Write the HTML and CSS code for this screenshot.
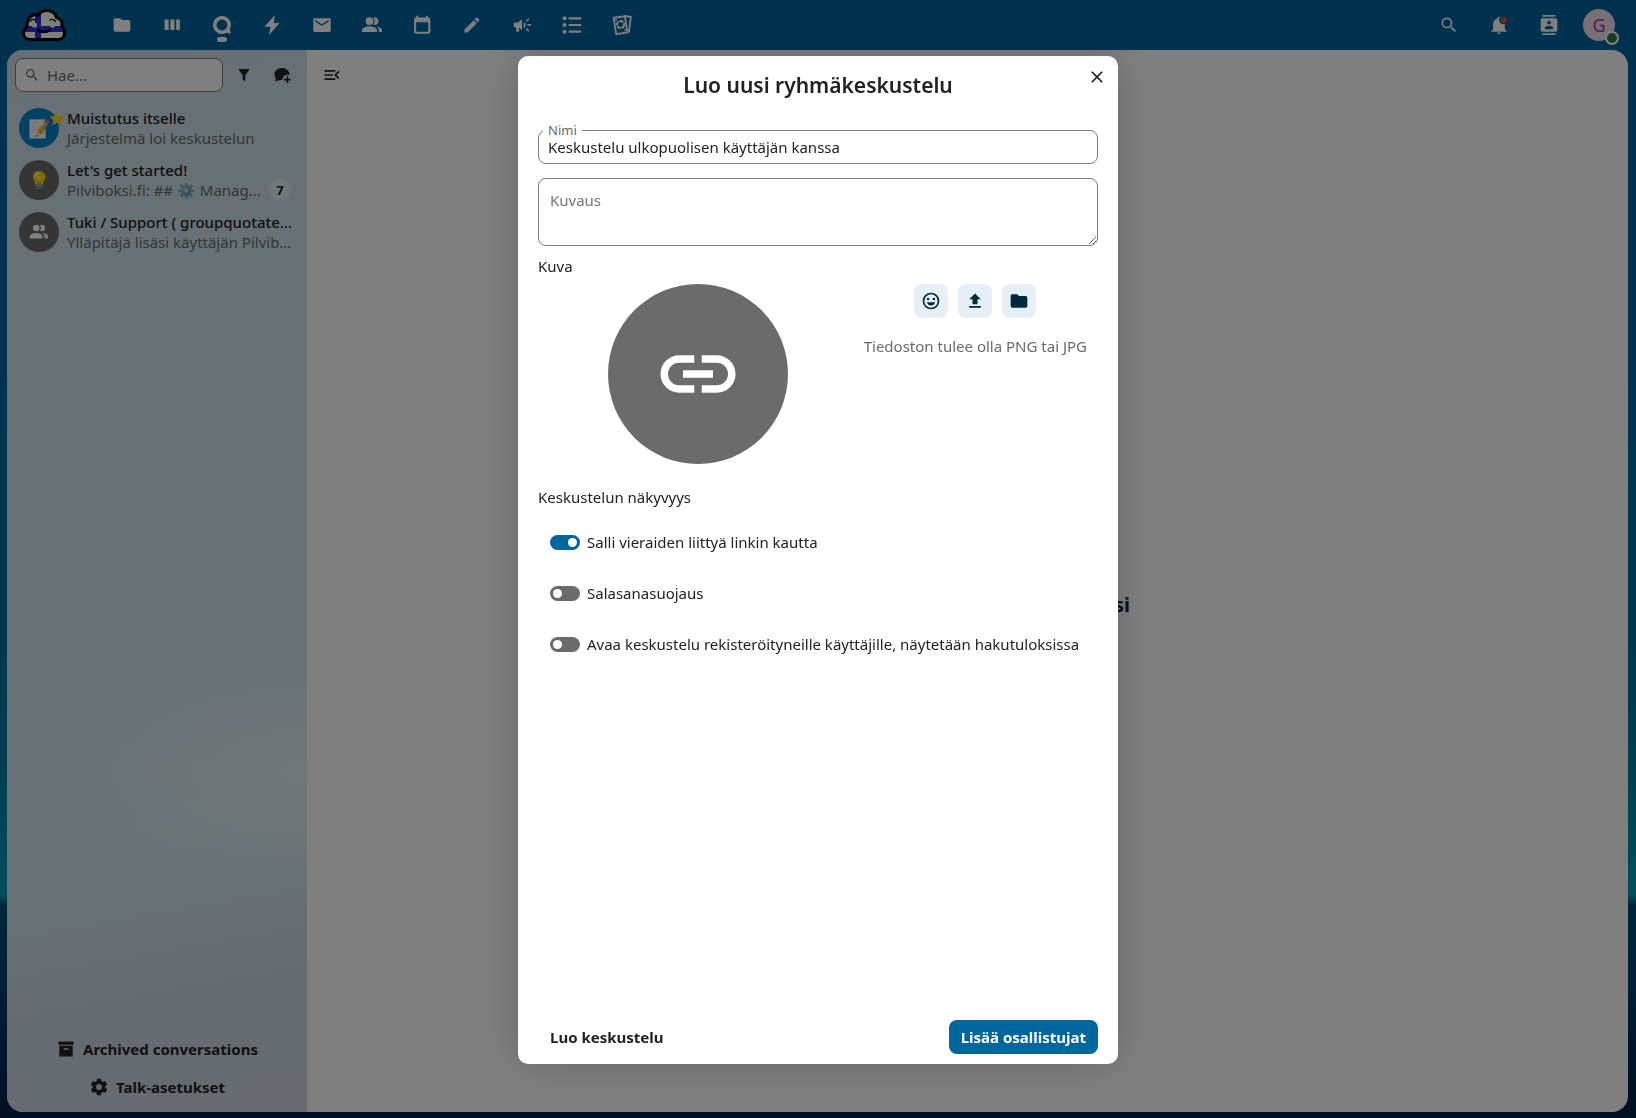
FILE: index.html
```html
<!DOCTYPE html>
<html lang="fi">
<head>
  <meta charset="UTF-8" />
  <meta name="viewport" content="width=device-width, initial-scale=1.0"/>
  <title>Luo uusi ryhmäkeskustelu</title>
  <link rel="stylesheet" href="styles.css">
</head>
<body>
  <!-- Top bar -->
  <header class="header">
    <a class="logo" href="#" aria-label="Pilviboksi">
      <svg width="44" height="32" viewBox="0 0 44 32">
        <defs>
          <clipPath id="cloud"><path d="M8 30.500c-4 0-6.500-3-6.500-6.500 0-3 1.500-5 3.500-6C4.500 11 8 6 13 5.500c1 0 2 .2 3 .5C18 3 21 1.500 25 1.500c5 0 9 3 9.500 7 4 1 6 4.500 5.500 8.500 1.700 1.500 2.500 4 2.500 6.500 0 4-2.500 7-6.500 7z"/></clipPath>
        </defs>
        <g clip-path="url(#cloud)">
          <path fill="#fff" d="M0 0h44v32H0z"/>
          <path fill="#2f2fd0" d="M13 0h6v32h-6zM0 17h44v6H0z"/>
        </g>
        <path fill="none" stroke="#000" stroke-width="3" d="M8 30.500c-4 0-6.500-3-6.500-6.500 0-3 1.500-5 3.500-6C4.500 11 8 6 13 5.500c1 0 2 .2 3 .5C18 3 21 1.500 25 1.500c5 0 9 3 9.500 7 4 1 6 4.500 5.500 8.500 1.700 1.500 2.500 4 2.500 6.500 0 4-2.500 7-6.500 7z"/>
        <circle cx="12.500" cy="16" r="2.600"/><circle cx="30.500" cy="16" r="2.600"/>
        <path fill="none" stroke="#000" stroke-width="1.300" stroke-linecap="round" d="M8 12.500c1-2 3.500-2.500 5.500-1.500M28 11c2-1 4.500-.5 5.500 1.500"/>
        <path fill="none" stroke="#000" stroke-width="2.600" stroke-linecap="round" d="M16 21c2.500 2.500 9 2.500 11.500 0"/>
      </svg>
    </a>
    <nav class="apps">
      <a href="#" aria-label="Tiedostot"><svg viewBox="0 0 24 24"><path d="M10 4H4c-1.110 0-2 .890-2 2v12a2 2 0 0 0 2 2h16a2 2 0 0 0 2-2V8a2 2 0 0 0-2-2h-8z"/></svg></a>
      <a href="#" aria-label="Pakka"><svg viewBox="0 0 24 24"><path d="M3 5.500h5v12.500H3zM10 5.500h5v12.500h-5zM17 5.500h4.500v12.500H17z"/></svg></a>
      <a href="#" aria-label="Talk" class="active"><svg viewBox="0 0 24 24"><path fill-rule="evenodd" d="M12 1.200a10.800 10.800 0 1 0 5.800 19.900c1.400.9 3.300 1.600 4.600 1 .5-.5-.8-3.100-1.100-4.700A10.800 10.800 0 0 0 12 1.200zm0 4.300a6.500 6.500 0 1 1 0 13 6.500 6.500 0 0 1 0-13z"/></svg></a>
      <a href="#" aria-label="Aktiviteetti"><svg viewBox="0 0 24 24"><path d="M15.500 0 3 14h7L8.500 24 21 9.500h-7z"/></svg></a>
      <a href="#" aria-label="Sähköposti"><svg viewBox="0 0 24 24"><path d="m20 8-8 5-8-5V6l8 5 8-5m2-2H3C1.890 4 1.500 4.890 1.500 6v12.500a2 2 0 0 0 2 2h17a2 2 0 0 0 2-2V6c0-1.110-.5-2-2-2z"/></svg></a>
      <a href="#" aria-label="Yhteystiedot"><svg viewBox="0 0 24 24"><path d="M9 12a4.700 4.700 0 1 0 0-9.400A4.700 4.700 0 0 0 9 12zM9 13.500c-3.300 0-9 1.500-9 4.800v2.200h18v-2.200c0-3.300-5.700-4.800-9-4.800zM15 12a4.700 4.700 0 1 0-1.500-9.100 6.800 6.800 0 0 1 0 8.400c.5.500 1 .7 1.500.7zM17.500 13.800c1.700 1.100 2.700 2.600 2.700 4.500v2.200H24v-2.200c0-2.500-3.400-4-6.500-4.500z"/></svg></a>
      <a href="#" aria-label="Kalenteri"><svg viewBox="0 0 24 24"><path fill-rule="evenodd" d="M5 1v2H4.500A2.300 2.300 0 0 0 2.500 5.300v14.900a2.300 2.300 0 0 0 2.300 2.300h14.900a2.300 2.300 0 0 0 2.300-2.300V5.300A2.300 2.300 0 0 0 19.700 3H19V1h-2.500v2h-9V1zM5 8.700h14.500V20H5z"/></svg></a>
      <a href="#" aria-label="Muistiinpanot"><svg viewBox="0 0 24 24"><path d="M20.710 7.040c.390-.390.390-1.040 0-1.410l-2.340-2.340c-.370-.390-1.020-.390-1.410 0l-1.840 1.830 3.750 3.750M3 17.250V21h3.750L17.810 9.930l-3.750-3.750z"/></svg></a>
      <a href="#" aria-label="Ilmoitukset"><svg viewBox="0 0 24 24"><path d="M12 5 7 9H4c-1 0-2 1-2 2v2c0 1 1 2 2 2h1v5h3.500v-5L12 18.500zM14 8v8a4.500 4.500 0 0 0 0-8zM16.500 6.800l3-3 1.300 1.500-3 2.800zM18.500 10.900H23v2h-4.500zM16.500 17l1.300-1.300 3 2.800-1.300 1.500z"/></svg></a>
      <a href="#" aria-label="Tehtävät"><svg viewBox="0 0 24 24"><circle cx="3" cy="4" r="2.400"/><circle cx="3" cy="12" r="2.400"/><circle cx="3" cy="20" r="2.400"/><path d="M8 2.800h15v2.600H8zM8 10.700h15v2.600H8zM8 18.600h15v2.600H8z"/></svg></a>
      <a href="#" aria-label="Kuvat"><svg viewBox="0 0 24 24"><g fill="none" stroke="currentColor" stroke-width="2.200"><path d="m2 3.300 13.500-1.800 3 19.500L5 23z"/><path d="M14 1l8.500 1.200-2 17.500-2 .3"/><circle cx="10.300" cy="11.500" r="4.200" stroke-width="2.600" stroke-dasharray="5 1"/></g><path d="M4 5h2v2H4zM14.500 17h2v2h-2z"/></svg></a>
    </nav>
    <div class="tools">
      <button aria-label="Haku"><svg viewBox="0 0 24 24"><path d="M9.500 3A6.500 6.500 0 0 1 16 9.500c0 1.610-.590 3.090-1.560 4.230l.270.270h.790l5 5-1.500 1.500-5-5v-.790l-.270-.270A6.500 6.500 0 1 1 9.500 3m0 2a4.500 4.500 0 1 0 0 9 4.500 4.500 0 0 0 0-9z"/></svg></button>
      <button aria-label="Ilmoitukset"><svg viewBox="0 0 24 24"><path d="M12 2a2 2 0 0 0-2 2v.3C7 5.200 5 7.900 5 11v6l-2 2v1h18v-1l-2-2v-6c0-3-2-5.800-5-6.700V4a2 2 0 0 0-2-2zm-2 19a2 2 0 0 0 4 0z"/><circle class="cutout" cx="17" cy="6" r="5"/><circle class="alert" cx="17.500" cy="6" r="3.600"/></svg></button>
      <button aria-label="Yhteystietohaku"><svg viewBox="0 0 24 24"><path fill-rule="evenodd" d="M4 0h16v2H4zM4 22h16v2H4zM4 4a2 2 0 0 0-2 2v12a2 2 0 0 0 2 2h16a2 2 0 0 0 2-2V6a2 2 0 0 0-2-2zM12 6.750a2.250 2.250 0 1 1 0 4.500 2.250 2.250 0 0 1 0-4.500zM17 17H7v-1.500c0-1.670 3.330-2.500 5-2.500s5 .830 5 2.500z"/></svg></button>
      <button class="me" aria-label="Asetukset">G<span class="status"></span></button>
    </div>
  </header>

  <div class="content">
    <!-- Conversation list -->
    <aside class="sidebar">
      <div class="search-row">
        <label class="search">
          <svg viewBox="0 0 24 24"><path d="M9.500 3A6.500 6.500 0 0 1 16 9.500c0 1.610-.590 3.090-1.560 4.230l.270.270h.790l5 5-1.500 1.500-5-5v-.790l-.270-.270A6.500 6.500 0 1 1 9.500 3m0 2a4.500 4.500 0 1 0 0 9 4.500 4.500 0 0 0 0-9z"/></svg>
          <input type="text" placeholder="Hae..." aria-label="Hae">
        </label>
        <button class="icon-btn" aria-label="Suodata"><svg viewBox="0 0 24 24"><path d="M14 12v7.880c.040.300-.060.620-.290.830a1 1 0 0 1-1.410 0l-2.010-2.010a.99.99 0 0 1-.290-.830V12h-.030L4.210 4.620a1 1 0 0 1 .170-1.400c.190-.140.400-.220.620-.220h14c.220 0 .430.080.620.220a1 1 0 0 1 .170 1.400L14.030 12z"/></svg></button>
        <button class="icon-btn" aria-label="Uusi keskustelu"><svg viewBox="0 0 24 24"><path d="M12 2.500c5.500 0 10 3.600 10 8 0 .6-.1 1.100-.2 1.700-.9-.4-1.800-.5-2.800-.5a6.500 6.500 0 0 0-6.300 6.700C6 19.500 4 20.500 1.800 20.800c1.500-1.300 2-3 2-4.300C2.500 14.800 2 12.800 2 10.500c0-4.400 4.500-8 10-8z"/><path d="M18 13.500h2.200V17H23.500v2.200h-3.300v3.300H18v-3.300h-3.500V17H18z"/></svg></button>
      </div>
      <ul class="conversations">
        <li>
          <span class="avatar avatar-note">📝<span class="star">⭐</span></span>
          <div class="info">
            <a class="name" href="#">Muistutus itselle</a>
            <div class="last"><span class="message">Järjestelmä loi keskustelun</span></div>
          </div>
        </li>
        <li>
          <span class="avatar">💡</span>
          <div class="info">
            <a class="name" href="#">Let's get started!</a>
            <div class="last"><span class="message">Pilviboksi.fi: ## ⚙️ Manag…</span><span class="counter">7</span></div>
          </div>
        </li>
        <li>
          <span class="avatar"><svg viewBox="0 0 24 24"><path d="M16 17v2H2v-2s0-4 7-4 7 4 7 4m-3.500-9.500A3.500 3.500 0 1 0 9 11a3.500 3.500 0 0 0 3.500-3.500m3.440 5.500A5.320 5.320 0 0 1 18 17v2h4v-2s0-3.630-6.060-4M15 4a3.390 3.390 0 0 0-1.930.590 5 5 0 0 1 0 5.820A3.390 3.390 0 0 0 15 11a3.500 3.500 0 0 0 0-7z"/></svg></span>
          <div class="info">
            <a class="name" href="#">Tuki / Support ( groupquotate…</a>
            <div class="last"><span class="message">Ylläpitäjä lisäsi käyttäjän Pilvib…</span></div>
          </div>
        </li>
      </ul>
      <div class="sidebar-footer">
        <button><svg viewBox="0 0 24 24"><path fill-rule="evenodd" d="M3 3h18v4H3zm1 5h16v13H4zm5.500 3a.5.5 0 0 0-.5.5V13h6v-1.500a.5.5 0 0 0-.5-.5z"/></svg>Archived conversations</button>
        <button><svg viewBox="0 0 24 24"><path d="M12 15.500A3.500 3.500 0 0 1 8.500 12 3.500 3.500 0 0 1 12 8.500a3.500 3.500 0 0 1 3.500 3.500 3.500 3.500 0 0 1-3.500 3.500m7.430-2.530c.040-.320.070-.640.070-.970s-.030-.660-.070-1l2.110-1.630c.190-.150.240-.420.120-.640l-2-3.460c-.120-.220-.390-.310-.610-.220l-2.490 1c-.520-.390-1.060-.730-1.690-.980l-.370-2.650A.506.506 0 0 0 14 2h-4c-.250 0-.460.180-.5.420l-.370 2.650c-.630.250-1.170.590-1.690.980l-2.490-1c-.220-.090-.490 0-.610.220l-2 3.460c-.130.220-.070.490.120.640L4.570 11c-.040.340-.070.670-.070 1s.030.650.070.970l-2.110 1.660c-.190.150-.250.420-.120.640l2 3.460c.120.220.390.300.610.220l2.490-1.010c.520.400 1.060.740 1.690.990l.370 2.650c.040.240.250.420.5.420h4c.250 0 .460-.180.5-.420l.370-2.650c.630-.260 1.170-.590 1.690-.990l2.490 1.010c.220.080.490 0 .610-.220l2-3.460c.120-.220.070-.490-.120-.640z"/></svg>Talk-asetukset</button>
      </div>
    </aside>

    <main class="main">
      <button class="icon-btn" aria-label="Sulje valikko"><svg viewBox="0 0 24 24"><path d="M21 15.610 19.590 17l-5.010-5 5.010-5L21 8.390 17.440 12zM3 6h13v2H3zm0 7v-2h10v2zm0 5v-2h13v2z"/></svg></button>
      <h2 class="empty">Liity keskusteluun tai aloita uusi</h2>
    </main>
  </div>

  <!-- New conversation dialog -->
  <div class="backdrop">
    <form class="modal" role="dialog" aria-labelledby="modal-title">
      <button type="button" class="close" aria-label="Sulje"><svg viewBox="0 0 24 24"><path d="M19 6.410 17.590 5 12 10.590 6.410 5 5 6.410 10.590 12 5 17.590 6.410 19 12 13.410 17.590 19 19 17.590 13.410 12z"/></svg></button>
      <h2 id="modal-title">Luo uusi ryhmäkeskustelu</h2>

      <div class="field">
        <label for="name">Nimi</label>
        <input type="text" id="name" value="Keskustelu ulkopuolisen käyttäjän kanssa">
      </div>
      <textarea class="description" placeholder="Kuvaus" aria-label="Kuvaus"></textarea>

      <div class="label">Kuva</div>
      <div class="picture">
        <div class="preview">
          <span class="circle"><svg viewBox="0 0 24 24"><path d="M11 7v2H7a3 3 0 0 0 0 6h4v2H7A5 5 0 0 1 7 7zM13 7h4a5 5 0 0 1 0 10h-4v-2h4a3 3 0 0 0 0-6h-4zM8 11h8v2H8z"/></svg></span>
        </div>
        <div class="upload">
          <div class="upload-buttons">
            <button type="button" aria-label="Emoji"><svg viewBox="0 0 24 24"><path fill-rule="evenodd" d="M12 2a10 10 0 1 0 0 20 10 10 0 0 0 0-20zm0 2a8 8 0 1 1 0 16 8 8 0 0 1 0-16zM8.500 8a1.500 1.500 0 1 0 0 3 1.500 1.500 0 0 0 0-3zm7 0a1.500 1.500 0 1 0 0 3 1.500 1.500 0 0 0 0-3zM7 13.500c.700 2.400 2.600 4 5 4s4.300-1.600 5-4z"/></svg></button>
            <button type="button" aria-label="Lähetä"><svg viewBox="0 0 24 24"><path d="M9 16v-6H5l7-7 7 7h-4v6zm-4 4v-2h14v2z"/></svg></button>
            <button type="button" aria-label="Valitse tiedosto"><svg viewBox="0 0 24 24"><path d="M10 4H4c-1.110 0-2 .890-2 2v12a2 2 0 0 0 2 2h16a2 2 0 0 0 2-2V8a2 2 0 0 0-2-2h-8z"/></svg></button>
          </div>
          <p>Tiedoston tulee olla PNG tai JPG</p>
        </div>
      </div>

      <div class="label">Keskustelun näkyvyys</div>
      <div class="switches">
        <label><input type="checkbox" checked>Salli vieraiden liittyä linkin kautta</label>
        <label><input type="checkbox">Salasanasuojaus</label>
        <label><input type="checkbox">Avaa keskustelu rekisteröityneille käyttäjille, näytetään hakutuloksissa</label>
      </div>

      <div class="actions">
        <button type="button" class="tertiary">Luo keskustelu</button>
        <button type="button" class="primary">Lisää osallistujat</button>
      </div>
    </form>
  </div>
</body>
</html>
```
FILE: styles.css
```css
* { box-sizing: border-box; }
body {
  margin: 0;
  height: 100vh;
  display: flex;
  flex-direction: column;
  overflow: hidden;
  font-family: "Noto Sans", sans-serif;
  font-size: 15px;
  line-height: 20px;
  color: #222;
  background: linear-gradient(#00659f 0%, #00649e 30%, #00709e 60%, #00809c 70%, #00a0b8 80%, #004a70 81%, #00406a 88%, #002a58 94%, #002048 100%);
}
button, input, textarea { font: inherit; color: inherit; }
button { border: 0; padding: 0; background: none; cursor: pointer; }
svg { display: block; fill: currentColor; }
a { color: inherit; text-decoration: none; }

/* Top bar */
.header { display: flex; align-items: center; height: 50px; flex: none; padding: 0 21px 0 22px; color: #fff; background: #00659f; }
.logo { margin-right: 31px; }
.apps { display: flex; flex: 1; }
.apps a { position: relative; display: grid; place-items: center; width: 50px; height: 50px; }
.apps svg, .tools svg { width: 20px; height: 20px; }
.apps .active::after { content: ""; position: absolute; bottom: 8px; left: 20px; width: 10px; height: 5px; border-radius: 3px; background: #fff; }
.tools { display: flex; align-items: center; }
.tools button { display: grid; place-items: center; width: 50px; height: 50px; }
.cutout { fill: #00659f; }
.alert { fill: #ff4020; }
.tools .me { position: relative; width: 32px; height: 32px; margin-left: 9px; border-radius: 50%; background: #f0e0ec; color: #a8309a; font-size: 18px; }
.status { position: absolute; right: -4px; bottom: -4px; width: 14px; height: 14px; border: 2px solid #fff; border-radius: 50%; background: #2d7b41; }

.content { flex: 1; display: flex; margin: 0 8px 6px 7px; border-radius: 16px; overflow: hidden; background: #fff; }

/* Sidebar */
.sidebar {
  width: 300px;
  display: flex;
  flex-direction: column;
  padding: 8px;
  background:
    radial-gradient(ellipse 260px 120px at 100% 68%, rgba(236, 240, 242, 0.7), transparent),
    linear-gradient(170deg, #cfdfe9 0%, #d0e4ec 40%, #cfe4ec 60%, #d0e8ec 74%, #cddbe6 83%, #ccd6e4 88%, #ced6df 100%);
}
.search-row { display: flex; align-items: center; gap: 4px; }
.search { display: flex; align-items: center; gap: 6px; width: 208px; height: 34px; padding: 0 8px; border: 1px solid #7d7d7d; border-radius: 8px; background: #fff; color: #6b6b6b; }
.search svg { width: 16px; height: 16px; flex: none; }
.search input { width: 100%; padding: 0 1px; border: 0; outline: 0; background: none; }
.search input::placeholder { color: #6b6b6b; opacity: 1; }
.icon-btn { display: grid; place-items: center; width: 34px; height: 34px; }
.icon-btn svg { width: 20px; height: 20px; }
.search-row .icon-btn svg { width: 18px; height: 18px; }
.search-row .icon-btn:first-of-type svg { width: 16px; height: 16px; }

.conversations { list-style: none; margin: 10px 0 0; padding: 0; flex: 1; }
.conversations li { display: flex; align-items: center; gap: 8px; height: 52px; padding: 0 6px 0 4px; }
.avatar { position: relative; display: grid; place-items: center; width: 40px; height: 40px; flex: none; border-radius: 50%; background: #6b6b6b; color: #fff; font-size: 18px; }
.avatar-note { background: #0082c9; }
.avatar svg { width: 22px; height: 22px; }
.star { position: absolute; top: 0; right: -6px; font-size: 13px; }
.info { flex: 1; min-width: 0; }
.name, .message { display: block; white-space: nowrap; }
.name { font-weight: 500; }
.last { display: flex; align-items: center; justify-content: space-between; height: 20px; color: #6b6b6b; }
.counter { flex: none; width: 22px; height: 22px; margin-right: 2px; border-radius: 50%; background: #e5eff5; color: #00293f; font-size: 13px; font-weight: bold; line-height: 22px; text-align: center; }
.sidebar-footer { display: flex; flex-direction: column; gap: 4px; }
.sidebar-footer button { display: flex; align-items: center; justify-content: center; gap: 7px; height: 34px; font-weight: bold; }
.sidebar-footer svg { width: 20px; height: 20px; }

/* Main area */
.main { flex: 1; display: flex; flex-direction: column; padding: 8px; }
.empty { margin: auto; padding-top: 14px; font-size: 20px; line-height: 30px; }

/* Dialog */
.backdrop { position: fixed; inset: 0; display: flex; justify-content: center; padding: 56px 16px 54px; background: rgba(0, 0, 0, 0.5); }
.modal { position: relative; display: flex; flex-direction: column; width: 600px; padding: 14px 20px 10px; border-radius: 10px; background: #fff; box-shadow: 0 0 40px rgba(0, 0, 0, 0.2); }
.modal h2 { margin: 0 0 30px; font-size: 21px; line-height: 30px; font-weight: 600; text-align: center; }
.close { position: absolute; top: 4px; right: 4px; display: grid; place-items: center; width: 34px; height: 34px; }
.close svg { width: 20px; height: 20px; }
.field { position: relative; }
.field label { position: absolute; top: -10px; left: 5px; padding: 0 5px; background: #fff; color: #6b6b6b; font-size: 13px; }
.field input { display: block; width: 100%; height: 34px; padding: 0 9px; border: 1px solid #7d7d7d; border-radius: 8px; }
.description { height: 68px; margin: 14px 0 10px; padding: 11px; border: 1px solid #7d7d7d; border-radius: 8px; resize: vertical; }
.description::placeholder { color: #767676; }
.picture { display: flex; margin: 8px 0 23px; }
.preview { flex: 1; display: flex; justify-content: center; padding-left: 6px; }
.circle { display: grid; place-items: center; width: 180px; height: 180px; border-radius: 50%; background: #6b6b6b; color: #fff; }
.circle svg { width: 90px; height: 90px; }
.upload { padding: 0 11px; }
.upload-buttons { display: flex; justify-content: center; gap: 10px; }
.upload-buttons button { display: grid; place-items: center; width: 34px; height: 34px; border-radius: 8px; background: #e5eff5; color: #00293f; }
.upload-buttons svg { width: 20px; height: 20px; }
.upload p { margin: 18px 0 0; color: #6b6b6b; }
.switches { display: flex; flex-direction: column; gap: 17px; margin-top: 18px; padding: 0 12px; }
.switches label { display: flex; align-items: center; gap: 7px; min-height: 34px; }
.switches input { appearance: none; display: flex; align-items: center; width: 30px; height: 15px; margin: 0; padding: 0 3px; border-radius: 8px; background: #6b6b6b; flex: none; }
.switches input::before { content: ""; width: 9px; height: 9px; border-radius: 50%; background: #fff; }
.switches input:checked { justify-content: flex-end; background: #00679e; }
.actions { display: flex; justify-content: space-between; margin-top: auto; }
.actions button { height: 34px; padding: 0 12px; border-radius: 8px; font-weight: bold; }
.primary { background: #00679e; color: #fff; }
```
